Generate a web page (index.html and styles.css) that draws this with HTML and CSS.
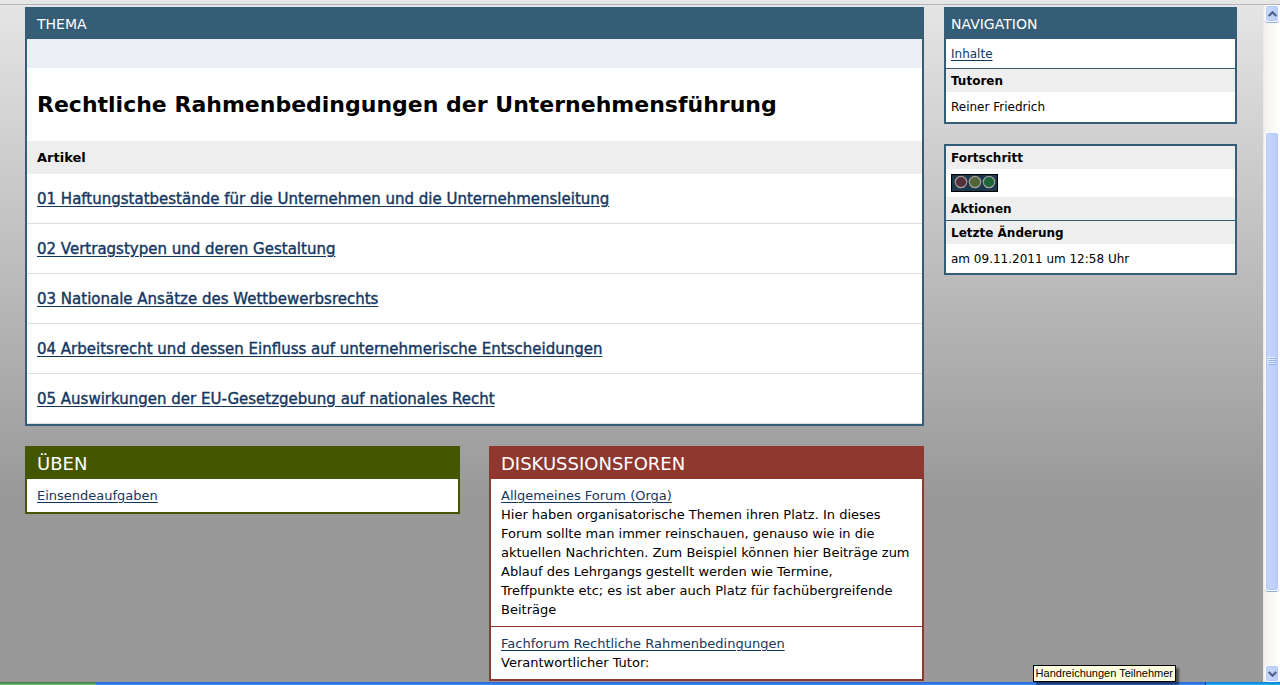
FILE: index.html
```html
<!DOCTYPE html>
<html lang="de">
<head>
<meta charset="utf-8">
<title>Rechtliche Rahmenbedingungen der Unternehmensführung</title>
<link rel="stylesheet" href="styles.css">
</head>
<body>
<div class="window-edge"></div>
<div class="viewport">
  <div class="page">
    <main class="content">
      <section class="panel">
        <h2 class="panel-title">THEMA</h2>
        <div class="toolbar"></div>
        <h1 class="topic">Rechtliche Rahmenbedingungen der Unternehmensführung</h1>
        <h3 class="list-title">Artikel</h3>
        <ul class="articles">
          <li><a href="#">01 Haftungstatbestände für die Unternehmen und die Unternehmensleitung</a></li>
          <li><a href="#">02 Vertragstypen und deren Gestaltung</a></li>
          <li><a href="#">03 Nationale Ansätze des Wettbewerbsrechts</a></li>
          <li><a href="#">04 Arbeitsrecht und dessen Einfluss auf unternehmerische Entscheidungen</a></li>
          <li><a href="#">05 Auswirkungen der EU-Gesetzgebung auf nationales Recht</a></li>
        </ul>
      </section>
      <div class="columns">
        <section class="panel panel-green">
          <h2 class="panel-title panel-title-large">ÜBEN</h2>
          <div class="entry"><a href="#">Einsendeaufgaben</a></div>
        </section>
        <section class="panel panel-red">
          <h2 class="panel-title panel-title-large">DISKUSSIONSFOREN</h2>
          <div class="entry">
            <a href="#">Allgemeines Forum (Orga)</a>
            <p>Hier haben organisatorische Themen ihren Platz. In dieses Forum sollte man immer reinschauen, genauso wie in die aktuellen Nachrichten. Zum Beispiel können hier Beiträge zum Ablauf des Lehrgangs gestellt werden wie Termine,<br>Treffpunkte etc; es ist aber auch Platz für fachübergreifende Beiträge</p>
          </div>
          <div class="entry">
            <a href="#">Fachforum Rechtliche Rahmenbedingungen</a>
            <p>Verantwortlicher Tutor:</p>
          </div>
        </section>
      </div>
    </main>
    <aside class="sidebar">
      <section class="panel">
        <h2 class="panel-title">NAVIGATION</h2>
        <p class="side-text"><a href="#">Inhalte</a></p>
        <h3 class="side-title side-title-ruled">Tutoren</h3>
        <p class="side-text side-text-last">Reiner Friedrich</p>
      </section>
      <section class="panel">
        <h3 class="side-title">Fortschritt</h3>
        <div class="progress">
          <svg class="lights" width="47" height="18" viewBox="0 0 47 18" role="img" aria-label="Ampel">
            <rect x=".5" y=".5" width="46" height="17" fill="#1d374b" stroke="#000"/>
            <g stroke="#a39e9b" stroke-width="1.2">
              <circle cx="10" cy="8" r="5.7" fill="#552e3c"/>
              <circle cx="24" cy="8" r="5.7" fill="#526538"/>
              <circle cx="38" cy="8" r="5.7" fill="#1b673b"/>
            </g>
          </svg>
        </div>
        <h3 class="side-title">Aktionen</h3>
        <h3 class="side-title side-title-ruled">Letzte Änderung</h3>
        <p class="side-text">am 09.11.2011 um 12:58 Uhr</p>
      </section>
    </aside>
  </div>
  <div class="scrollbar">
    <button class="scroll-button" type="button" aria-label="Nach oben">
      <svg width="9" height="6" viewBox="0 0 9 6"><path d="M.8 5 4.5 1.3 8.2 5" fill="none" stroke="#4d6185" stroke-width="2.2"/></svg>
    </button>
    <div class="track-above"></div>
    <div class="thumb">
      <svg width="8" height="8" viewBox="0 0 8 8"><path d="M0 .5h7M0 2.5h7M0 4.5h7M0 6.5h7" stroke="#eef4fe"/><path d="M1 1.5h7M1 3.5h7M1 5.5h7M1 7.5h7" stroke="#8cb0f8"/></svg>
    </div>
    <div class="track-below"></div>
    <button class="scroll-button" type="button" aria-label="Nach unten">
      <svg width="9" height="6" viewBox="0 0 9 6"><path d="M.8 1 4.5 4.7 8.2 1" fill="none" stroke="#4d6185" stroke-width="2.2"/></svg>
    </button>
  </div>
</div>
<div class="taskbar"><div class="start"></div><div class="tasks"></div><div class="tray"></div></div>
<div class="tooltip" role="tooltip">Handreichungen Teilnehmer</div>
</body>
</html>
```
FILE: styles.css
```css
* {
  box-sizing: border-box;
}

body {
  margin: 0;
  min-height: 100vh;
  display: flex;
  flex-direction: column;
  position: relative;
  font: 13px/19px Verdana, "DejaVu Sans", sans-serif;
  color: #000;
}

h1, h2, h3, p, ul {
  margin: 0;
  padding: 0;
}

a {
  color: #14375f;
  text-underline-offset: 2px;
}

.window-edge {
  height: 5px;
  background: #e6e6e4;
  border-bottom: 1px solid #b0b3c0;
}

.viewport {
  flex: 1;
  display: flex;
}

.page {
  flex: 1;
  display: flex;
  gap: 20px;
  padding: 2px 26px 1px 25px;
  background: #999 linear-gradient(#e5e5e5, #999 490px) no-repeat;
}

.content {
  flex: 1;
  display: flex;
  flex-direction: column;
  gap: 20px;
}

.sidebar {
  width: 293px;
  display: flex;
  flex-direction: column;
  gap: 20px;
}

.columns {
  display: grid;
  grid-template-columns: 1fr 1fr;
  align-items: start;
  gap: 29px;
}

.panel {
  border: 2px solid #355d77;
  background: #fff;
}

.panel-green {
  border-color: #445700;
}

.panel-red {
  border-color: #8f3830;
}

.panel-title {
  padding: 5px 10px;
  background: #355d77;
  color: #fff;
  font-size: 14px;
  line-height: 20px;
  font-weight: 400;
}

.sidebar .panel-title {
  padding: 5px;
}

.panel-title-large {
  font-size: 18px;
  line-height: 21px;
}

.panel-green .panel-title {
  background: #445700;
}

.panel-red .panel-title {
  background: #8f3830;
}

.toolbar {
  height: 29px;
  background: #ebeff5;
}

.topic {
  padding: 22px 10px;
  font-size: 22px;
  line-height: 29px;
}

.list-title {
  padding: 7px 10px;
  background: #eee;
  font-size: 13px;
  line-height: 19px;
}

.articles {
  list-style: none;
}

.articles li {
  padding: 16px 10px 14px;
  border-bottom: 1px solid #ddd;
  font-size: 15px;
  line-height: 19px;
  -webkit-text-stroke: 0.4px #14375f;
}

.entry {
  padding: 7px 10px;
}

.entry + .entry {
  border-top: 1px solid #8f3830;
}

.side-title {
  padding: 3px 5px 1px;
  background: #eee;
  font-size: 12px;
  line-height: 19px;
}

.side-title-ruled {
  border-top: 1px solid #355d77;
}

.side-text {
  padding: 6px 5px 4px;
  font-size: 12px;
}

.side-text-last {
  padding-bottom: 5px;
}

.progress {
  padding: 5px;
}

.lights {
  display: block;
}

.scrollbar {
  width: 17px;
  display: flex;
  flex-direction: column;
  padding: 0 1px;
  border-left: 1px solid #eeebe5;
  background: linear-gradient(90deg, #f3f1ec, #fefefb);
}

.scroll-button,
.thumb {
  display: flex;
  align-items: center;
  justify-content: center;
  padding: 0;
  border: 1px solid #fff;
  border-radius: 3px;
  background: linear-gradient(90deg, #c8d6fb, #bacdfc);
  box-shadow: inset 0 0 0 1px #b4c8f6, 0 1px #8eade4;
}

.scroll-button {
  height: 17px;
}

.track-above {
  flex: 110;
}

.thumb {
  flex: 459;
}

.track-below {
  flex: 74;
}

.taskbar {
  height: 3px;
  display: flex;
}

.start {
  width: 96px;
  background: linear-gradient(#2f7a38, #7cbd7c);
}

.tasks {
  flex: 1;
  background: linear-gradient(#2a62d8, #3f8cf0);
}

.tray {
  width: 75px;
  border-left: 1px solid #0a3f8f;
  background: linear-gradient(#1278d4, #19b9f3);
}

.tooltip {
  position: absolute;
  right: 104px;
  bottom: 3px;
  padding: 1px 2px;
  border: 1px solid #000;
  background: #ffffe1;
  box-shadow: 3px 3px 2px rgba(0, 0, 0, 0.5);
  font: 11px/13px "Liberation Sans", Arial, sans-serif;
  white-space: nowrap;
}
```
